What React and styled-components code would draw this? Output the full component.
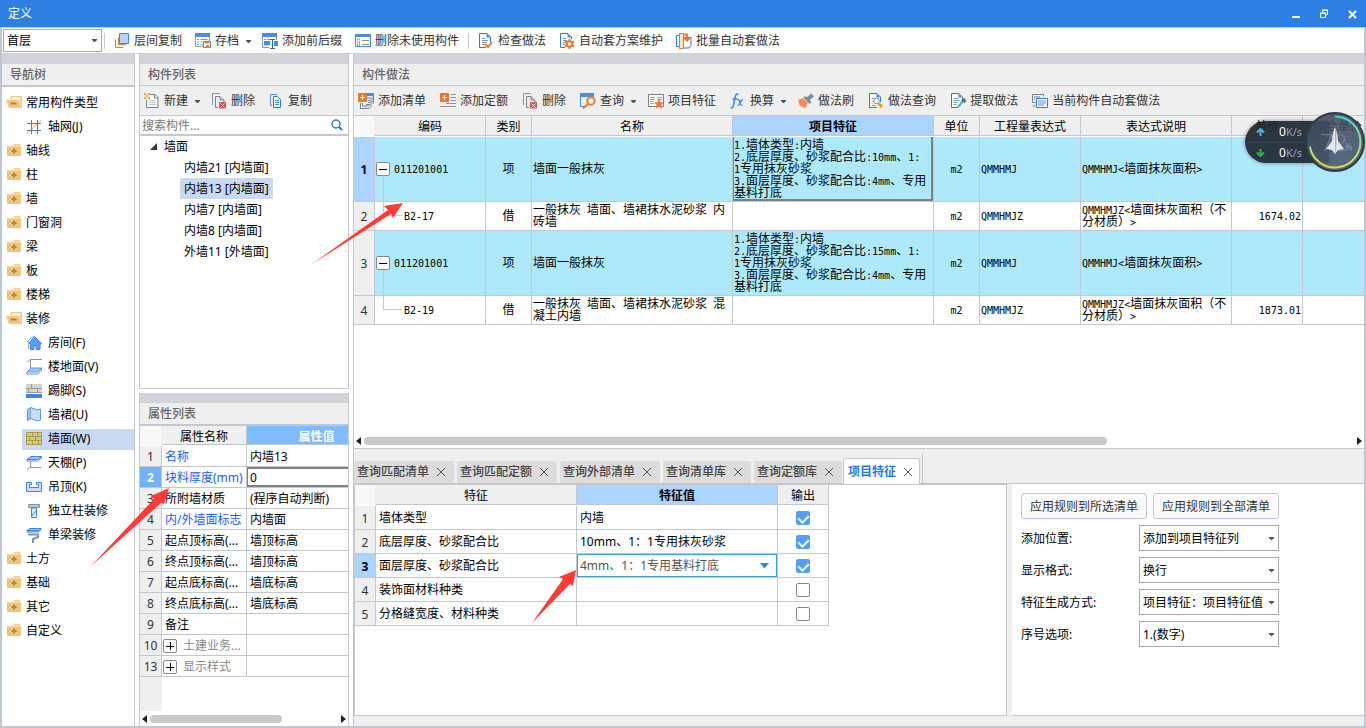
import React, { useState } from 'react';
import styled, { createGlobalStyle, css } from 'styled-components';

const line = '#c3c7d2';
const gray = '#efefef';
const orange = '#e8792b';

const GlobalStyle = createGlobalStyle`
  * {
    box-sizing: border-box;
  }
  body {
    margin: 0;
    background: #fff;
    overflow: hidden;
  }
  body, button, input, select {
    font-family: 'Noto Sans', 'Noto Sans CJK SC', sans-serif;
    font-size: 12px;
    line-height: 16px;
    color: #000;
  }
  button {
    padding: 0;
    border: 0;
    background: none;
  }
`;

/* ---------- icons ---------- */

const IconBox = styled.svg`
  flex: none;
  display: block;
  width: ${({ $w }) => $w || 16}px;
  height: 16px;
  fill: none;
`;

const icons = {
  floors: (
    <>
      <path d="M1.500 6.500v8H9M4.500 4.500v7H12" stroke={orange} />
      <path d="M5.500 .5h9v10h-9z" fill="#b3d4fc" stroke="#3f86dc" />
    </>
  ),
  archive: (
    <>
      <path d="M0 0h15v4H0z" fill="#4a8de0" />
      <path d="M.5 4v9.500H8M14.500 4v4" stroke="#8fa0b2" />
      <path d="M2 6.500h2M5.500 6.500h7M2 9h2M5.500 9h2M2 11.500h2M5.500 11.500h2" stroke="#7d93ab" />
      <path d="M8.500 8.500h7v6h-7z" fill="#fff" stroke="#3f86dc" />
      <path d="M10 8.500h4v2h-4zM11 12h3v3h-3z" fill={orange} />
    </>
  ),
  affix: (
    <>
      <path d="M0 0h15v4H0z" fill="#4a8de0" />
      <path d="M.5 4v10.500H7M14.500 4v3M2 6.500h2M5 6.500h3M2 12h4" stroke="#7d93ab" />
      <path d="M2 8h6v4H2zM12 8h4v5h-4z" fill="#4a8de0" />
      <path d="M8 6.500h5M8 15.500h5M10.500 6.500v9" stroke="#33699f" />
    </>
  ),
  unused: (
    <>
      <path d="M.5 1.500h15v12H.5z" fill="#fff" stroke="#4a8de0" />
      <path d="M0 1h16v3H0z" fill="#4a8de0" />
      <path d="M2 6.500h3M2 9.500h3M2 12h3" stroke={orange} strokeDasharray="1 1" strokeWidth="2" />
      <path d="M7 7.500h7M7 11.500h7" stroke="#8b9299" />
    </>
  ),
  check: (
    <>
      <path d="M12.500 9V4L9 .5H1.500v14H8" stroke="#2f7bc8" fill="#fff" />
      <path d="M8.500 .5v4h4z" fill="#4a8de0" />
      <path d="M4 5.500h3M4 7.500h6M4 9.500h5M4 11.500h3" stroke="#8496a8" />
      <path d="M7 11l3 3 4-5" stroke={orange} strokeWidth="2" />
    </>
  ),
  scheme: (
    <>
      <path d="M12.500 6V4L9 .5H1.500v14H6" stroke="#2f7bc8" fill="#fff" />
      <path d="M8.500 .5v4h4z" fill="#4a8de0" />
      <path d="M4 5.500h3M4 7.500h4M4 9.500h2M4 11.500h2" stroke="#8496a8" />
      <circle cx="10.500" cy="11" r="2.800" stroke={orange} strokeWidth="2" fill="#fff" />
      <path d="M10.500 6v2M10.500 14v2M6 8.500l2 1M13 12.500l2 1M6 13.500l2-1M13 9.500l2-1" stroke={orange} strokeWidth="2" />
    </>
  ),
  batch: (
    <>
      <path d="M4 2.500H.5v11H4M9 4.500h6v8l-2 2.500H8" stroke="#3277c4" fill="#fff" />
      <path d="M3.500 .5h4v15h-4z" fill="#fde3cf" stroke={orange} />
      <path d="M7 1.500h4v5M8 4.500l3 3 3-3" stroke={orange} strokeWidth="2" />
    </>
  ),
  create: (
    <>
      <path d="M6 1.500h5l3 3v10H2.500V7" stroke="#77818c" fill="#fafafa" />
      <path d="M10.500 1.500v3.500h3.500" stroke="#77818c" />
      <path d="M5 7.500h7M5 9.500h7M5 11.500h7" stroke="#c6cbd1" />
      <path d="M0 0h2v2H0zM4 0h2v2H4zM2 2h2v2H2zM0 4h2v2H0zM4 4h2v2H4z" fill="#f0a030" />
    </>
  ),
  remove: (
    <>
      <path d="M1.500 12V.5H9" stroke="#8a929b" />
      <path d="M4.500 14.500v-11H9l4 4V9M4.500 14.500H7M9 3.500V7h4" stroke="#77818c" fill="none" />
      <path d="M8 9h7v6.500H8z" fill="#d9535a" />
      <path d="M9.500 10.500l4 4M13.500 10.500l-4 4" stroke="#fff" />
    </>
  ),
  copy: (
    <>
      <path d="M4 12.500H2.500V1.500h6v1" stroke="#5f93c9" />
      <path d="M5.500 3.500h4l3 3v8h-7z" stroke="#2f7bc8" fill="#fff" />
      <path d="M7 7.500h4M7 9.500h4M7 11.500h4" stroke="#4a8de0" />
    </>
  ),
  addList: (
    <>
      <path d="M9 .5h6.500v10M9 2h6" stroke="#4a8de0" strokeWidth="2" />
      <path d="M2.500 10v5.500H11l2-2V5H9M4.500 10v3H11M10 7.500h2M10 9.500h2M8 11.500h4" stroke="#77818c" />
      <path d="M0 0h9v9H0z" fill={orange} />
      <path d="M4.500 2v5M2 4.500h5" stroke="#fff" />
    </>
  ),
  addQuota: (
    <>
      <path d="M11 1.500h5M11 4.500h5M11 7.500h5M6 10.500h10M0 13.500h16" stroke="#8b9299" />
      <path d="M0 0h9v9H0z" fill={orange} />
      <path d="M4.500 2v5M2 4.500h5" stroke="#fff" />
    </>
  ),
  search: (
    <>
      <path d="M.5 4v9.500H4" stroke="#4a8de0" />
      <path d="M0 0h14v4H0z" fill="#4a8de0" />
      <circle cx="11" cy="8" r="3.700" stroke={orange} strokeWidth="2" fill="#fff" />
      <path d="M8 11l-5 4.500" stroke={orange} strokeWidth="2" />
    </>
  ),
  feature: (
    <>
      <path d="M.5 1.500h15v12H.5z" fill="#fff" stroke="#77818c" />
      <path d="M2 4.500h5M2 6.500h5M2 8.500h4M2 10.500h4M9 4.500h5M9 6.500h5" stroke="#9aa3ac" />
      <path d="M11 6l1.500 3.300 3.500.3-2.700 2.400.8 3.500L11 13.700l-3.100 1.800.8-3.500L6 9.600l3.500-.3z" fill={orange} />
    </>
  ),
  fx: (
    <>
      <path d="M8.500 1.500C6.500 0 5.500 2 5 5L3.500 12C3 15 2 15.500.5 14.500M2.500 6h5" stroke="#3f86dc" strokeWidth="1.500" />
      <path d="M7.500 7c2-1 2 1 2.500 3s1 3 2.500 2M13 6.500c-2 0-3.500 6.500-5.500 6" stroke="#3f86dc" strokeWidth="1.300" />
    </>
  ),
  brush: (
    <>
      <path d="M0 7l5-2 5 5-3 5.500-2-1.500-1 .5-.5-2-1.500.5z" fill="#f58a56" />
      <path d="M5.500 4.500l2-1.500 6 6-2 2z" fill="#7d8b98" />
      <path d="M10 6l4.500-4" stroke="#7d8b98" strokeWidth="4" />
    </>
  ),
  lookup: (
    <>
      <path d="M12.500 9V4L9 .5H1.500v14H9" stroke="#2f7bc8" fill="#fff" />
      <path d="M8.500 .5v4h4z" fill="#4a8de0" />
      <path d="M3.500 5.500h2M3.500 8h1M3.500 10.500h1M4 12.500h4" stroke="#8496a8" />
      <circle cx="8.500" cy="8" r="2.800" stroke="#5a8fca" />
      <path d="M10.500 10.500l3.500 3.500" stroke="#f09a1f" strokeWidth="3" />
    </>
  ),
  extract: (
    <>
      <path d="M12.500 5V4L9 .5H1.500v14H8" stroke="#2f7bc8" fill="#fff" />
      <path d="M8.500 .5v4h4z" fill="#4a8de0" />
      <path d="M3.500 5.500h5M3.500 7.500h6M3.500 9.500h4M3.500 11.500h3" stroke="#8496a8" />
      <path d="M8 14l5-6" stroke="#3cb6d8" strokeWidth="2" />
      <path d="M12 6l3.500 3" stroke="#66717d" strokeWidth="3" />
      <path d="M13 8l2-2.500" stroke="#66717d" strokeWidth="2" />
    </>
  ),
  current: (
    <>
      <path d="M3.500 9.500h-3v-8h11v2M2 4h6M2 6h1" stroke="#77818c" />
      <path d="M1 11.500l2 2M1 14l2-2" stroke={orange} />
      <path d="M4.500 5.500h11v9h-11z" fill="#fff" stroke="#2f7bc8" />
      <path d="M6 8h8M6 10h8M6 12h6" stroke="#4a8de0" />
    </>
  ),
  folder: (
    <>
      <path d="M8 1h6l1 2v2H7z" fill="#f0cf93" />
      <path d="M1 3h13a1 1 0 0 1 1 1v8a1 1 0 0 1-1 1H2a1 1 0 0 1-1-1z" fill="#efc67c" />
      <path d="M1 3h14" stroke="#f8e6c3" />
      <path d="M8 5.500v5M5.500 8h5" stroke="#b58a35" strokeWidth="2" />
    </>
  ),
  folderOpen: (
    <>
      <path d="M5 1.500h10.500v11H5z" fill="#fdf6e6" stroke="#efc67c" />
      <path d="M0 5h13l2 8H3z" fill="#efc67c" />
      <path d="M14 3h1.500v10H15z" fill="#efc67c" />
      <path d="M4.500 8.500h6" stroke="#b58a35" strokeWidth="2" />
    </>
  ),
  axis: (
    <>
      <path d="M5.500 1v14M11.500 1v14M1 4.500h14M1 11.500h14" stroke="#4a7fb5" />
      <path d="M1 14.500L15 1.500" stroke={orange} strokeDasharray="2 1" />
    </>
  ),
  house: (
    <>
      <path d="M1 7l6-6M2.500 7v7" stroke="#7db4f3" />
      <path d="M8.500 1.500l7 7-1.500 1v5h-4v-4H8v4H4.500v-5L3 8z" fill="#5a9ff0" stroke="#3f86dc" />
    </>
  ),
  floor: (
    <>
      <path d="M1 3.500L4 .5h12M4.500 1v8" stroke="#8a929b" />
      <path d="M1 13l4-4h10.500L12 13z" fill="#9cc6f7" stroke="#5a96dc" />
      <path d="M1 13v2h11l3.500-4V9" stroke="#5a96dc" />
    </>
  ),
  skirting: (
    <>
      <path d="M0 1h16v9H0z" fill="#d4d4d2" />
      <path d="M0 5.500h16M5.500 1v4M11.500 5v5M2.500 5v5M0 9.500h16" stroke="#9b9b9b" />
      <path d="M0 11h16v4H0z" fill="#3f86dc" />
    </>
  ),
  wainscot: (
    <>
      <path d="M1.500 2.500l3.500-2v11l-3.500 2z" fill="#9cc6f7" stroke="#5a96dc" />
      <path d="M5 .5L11 3l3.500-1v11L11 14l-6-2.500" fill="#c4defb" stroke="#5a96dc" />
    </>
  ),
  wall: (
    <>
      <path d="M.5 1.500h15v12H.5z" fill="#cfc997" stroke="#b09a3e" />
      <path d="M0 5.500h16M0 9.500h16M6.500 1v4M11.500 1v4M3.500 5v4M9.500 5v4M6.500 9v5M12.500 9v5" stroke="#b09a3e" />
    </>
  ),
  ceiling: (
    <>
      <path d="M1 4.500l4-3h10.500l-4 3z" fill="#9cc6f7" stroke="#3f86dc" />
      <path d="M1 4.500V6h10.500l4-3V1.500" stroke="#3f86dc" />
      <path d="M4.500 7v5.500H15M4.500 12L1 15" stroke="#8a929b" />
    </>
  ),
  suspended: (
    <path d="M.5 3.500h5v2h-2v3h9v-3h-2v-2h5v9H.5z" fill="#c4defb" stroke="#3f86dc" />
  ),
  column: (
    <>
      <path d="M2.500 1.500h11v3h-11z" fill="#bfc4ca" stroke="#8a929b" />
      <path d="M5.500 5h5v9.500h-5z" fill="#d9eafc" stroke="#3f86dc" />
      <path d="M6 13l4-5" stroke="#3f86dc" />
    </>
  ),
  beam: (
    <>
      <path d="M1 3.500l3-2h11.500l-3 2zM1 3.500V5h11l3-2" fill="#9cc6f7" stroke="#3f86dc" />
      <path d="M2 7.500h10v2.500L7 12v4" stroke="#8a929b" strokeWidth="2" />
    </>
  ),
};

function Icon({ name }) {
  return <IconBox viewBox="0 0 16 16" aria-hidden="true">{icons[name]}</IconBox>;
}

function Caret() {
  return (
    <IconBox $w={9} viewBox="0 0 9 16" aria-hidden="true">
      <path d="M3 7h5v1L6 10H5L3 8z" fill="#555" />
    </IconBox>
  );
}

/* ---------- window ---------- */

const Window = styled.div`
  position: relative;
  display: flex;
  flex-direction: column;
  height: 100vh;
  background: #fff;
  overflow: hidden;
`;

const TitleBar = styled.header`
  flex: none;
  display: flex;
  justify-content: space-between;
  align-items: center;
  height: 27px;
  padding-left: 8px;
  background: #2d7fe2;
  color: #fff;
`;

const WindowButtons = styled.div`
  display: flex;
`;

const WindowButton = styled.button`
  display: flex;
  justify-content: center;
  width: 28px;
`;

const Frame = styled.div`
  flex: 1;
  min-height: 0;
  display: flex;
  flex-direction: column;
  border: solid #c0c6d2;
  border-width: 1px 2px 2px;
`;

const MainToolbar = styled.div`
  flex: none;
  display: flex;
  align-items: center;
  gap: 5px;
  height: 26px;
  padding-left: 1px;
  border-bottom: 1px solid #cfd1d6;
`;

const FloorPicker = styled.div`
  display: flex;
  align-items: center;
  gap: 2px;
`;

const Separator = styled.i`
  width: 1px;
  height: 16px;
  background: #c9c9c9;
`;

const ToolButton = styled.button`
  flex: none;
  display: flex;
  align-items: center;
  gap: 4px;
  padding: 2px ${({ $caret }) => ($caret ? 1 : 4)}px 2px 4px;
  white-space: nowrap;
  color: #333;
`;

function Tool({ icon, children, caret }) {
  return (
    <ToolButton type="button" $caret={caret}>
      <Icon name={icon} />
      {children}
      {caret && <Caret />}
    </ToolButton>
  );
}

const SelectWrap = styled.div`
  display: grid;
  align-items: center;
  width: ${({ $width }) => $width};
  height: ${({ $height }) => $height}px;
  border: ${({ $plain }) => ($plain ? '1px solid #3ba3d0' : '1px solid #a9a9a9')};
  background: #fff;

  > * {
    grid-area: 1 / 1;
  }
  > svg {
    justify-self: end;
    margin-right: ${({ $plain }) => ($plain ? 7 : 4)}px;
    pointer-events: none;
  }
`;

const Select = styled.select`
  appearance: none;
  width: 100%;
  height: 100%;
  padding: 1px 10px 0 ${({ $muted }) => ($muted ? 2 : 3)}px;
  border: 0;
  outline: 0;
  background: transparent;
  color: ${({ $muted }) => ($muted ? '#555' : '#000')};
`;

function ComboBox({ id, label, options, width, height, cell }) {
  return (
    <SelectWrap $width={width} $height={height} $plain={cell}>
      <Select id={id} aria-label={label} $muted={cell}>
        {options.map((o) => <option key={o}>{o}</option>)}
      </Select>
      {cell ? (
        <svg width="9" height="5" aria-hidden="true"><path d="M0 0h9L5 5H4z" fill="#3b8cba" /></svg>
      ) : (
        <svg width="5" height="3" aria-hidden="true"><path d="M0 0h5v1L3 3H2L0 1z" fill="#555" /></svg>
      )}
    </SelectWrap>
  );
}

/* ---------- panels ---------- */

const Workspace = styled.main`
  flex: 1;
  min-height: 0;
  display: grid;
  grid-template-columns: 133px 210px minmax(0, 1fr);
  gap: 4px;
`;

const MiddleColumn = styled.div`
  display: grid;
  grid-template-rows: 335fr 333fr;
  gap: 4px;
  min-height: 0;
`;

const RightColumn = styled.div`
  display: grid;
  grid-template-rows: 395fr 277fr;
  min-height: 0;
`;

const Panel = styled.section`
  display: flex;
  flex-direction: column;
  min-width: 0;
  min-height: 0;
  overflow: hidden;
  border: solid ${line};
  border-width: ${({ $border }) => $border};
`;

const PanelTitle = styled.h2`
  flex: none;
  margin: 0;
  padding: 3px 8px 2px;
  border-top: 10px solid #d2d4da;
  border-bottom: ${({ $thick }) => ($thick ? 2 : 1)}px solid ${line};
  background: ${gray};
  font-size: 12px;
  font-weight: 500;
  line-height: 16px;
  color: #666;
`;

const PanelToolbar = styled.div`
  flex: none;
  display: flex;
  align-items: center;
  gap: ${({ $gap }) => $gap}px;
  height: 30px;
  border-bottom: 1px solid ${line};
  background: ${gray};
  overflow: hidden;
`;

/* ---------- trees ---------- */

const NavList = styled.ul`
  margin: 0;
  padding: 4px 0 0;
  list-style: none;
`;

const NavItem = styled.li`
  display: flex;
  align-items: center;
  height: 24px;
`;

const NavLink = styled.a`
  flex: 1;
  display: flex;
  align-items: center;
  gap: ${({ $child }) => ($child ? 6 : 4)}px;
  height: 21px;
  margin-left: ${({ $child }) => ($child ? 20 : 0)}px;
  padding-left: 4px;
  background: ${({ $selected }) => ($selected ? '#c8d9f1' : 'none')};
  color: #000;
  text-decoration: none;
  white-space: nowrap;
`;

const SearchBar = styled.div`
  flex: none;
  display: flex;
  align-items: center;
  height: 20px;
  padding-right: 5px;
  border-bottom: 2px solid ${line};
`;

const SearchInput = styled.input`
  flex: 1;
  min-width: 0;
  height: 18px;
  padding: 0 2px;
  border: 0;
  outline: 0;

  &::placeholder {
    color: #777;
  }
`;

const ComponentList = styled.ul`
  margin: 0;
  padding: 0;
  list-style: none;

  ul {
    margin: 0;
    padding: 0 0 0 40px;
    list-style: none;
  }
`;

const GroupRow = styled.div`
  display: flex;
  align-items: center;
  gap: 7px;
  height: 21px;
  padding-left: 10px;
`;

const ComponentRow = styled.li`
  width: max-content;
  padding: 3px 4px 2px;
  background: ${({ $selected }) => ($selected ? '#c8d9f1' : 'none')};
`;

/* ---------- tables ---------- */

const TableArea = styled.div`
  flex: 1;
  min-height: 0;
  overflow: hidden;
  background: ${({ $gutter }) =>
    $gutter ? `linear-gradient(90deg, ${gray} ${$gutter}px, #fff ${$gutter}px)` : '#fff'};
`;

const Table = styled.table`
  table-layout: fixed;
  width: ${({ $width }) => $width}px;
  border-spacing: 0;
`;

const Th = styled.th`
  height: ${({ $height }) => $height || 21}px;
  padding: 2px 3px 0;
  border-right: 1px solid ${line};
  border-bottom: 1px solid #fff;
  background: ${gray};
  box-shadow: inset 0 -1px ${line};
  font-weight: 400;
  white-space: nowrap;

  ${({ $corner }) => $corner && css`
    background: #f8f8f8;
    border-right-color: ${gray};
    box-shadow: none;
  `}
  ${({ $active }) => $active && css`
    background: #abd5ff;
    font-weight: 700;
  `}
  ${({ $strong }) => $strong && css`
    background: #80bbfc;
    color: #fff;
    font-weight: 700;
  `}
`;

const Td = styled.td`
  position: relative;
  height: ${({ $height }) => $height}px;
  padding: ${({ $top }) => $top || 0}px ${({ $pad }) => ($pad === undefined ? 3 : $pad)}px 0;
  border-right: 1px solid ${line};
  border-bottom: 1px solid ${line};
  background: ${({ $fill }) => $fill || '#fff'};
  color: ${({ $color }) => $color || '#000'};
  text-align: ${({ $align }) => $align || 'left'};
  vertical-align: middle;
  white-space: nowrap;
  overflow: hidden;
`;

const RowNumber = styled(Td).attrs({ as: 'th', scope: 'row' })`
  padding: 2px 0 0;
  background: ${gray};
  color: #333;
  font-weight: 400;
  text-align: center;

  ${({ $current }) => $current && css`
    background: ${$current};
    color: ${({ $color }) => $color || '#000'};
    font-weight: 700;
  `}
`;

const GridCell = styled(Td)`
  padding: 0 1px;
  line-height: 12px;
  white-space: pre;
  ${({ $focused }) => $focused && css`
    box-shadow: inset 1px 0 #808080, inset -2px -2px #808080;
  `}
`;

const CodeCell = styled(GridCell)`
  padding-left: ${({ $child }) => ($child ? 29 : 1)}px;

  &::before {
    content: '';
    position: absolute;
    left: 8px;
    top: ${({ $child }) => ($child ? '0' : '50%')};
    bottom: ${({ $child }) => ($child ? '50%' : '0')};
    width: ${({ $child }) => ($child ? 18 : 1)}px;
    border: solid ${line};
    border-width: 0 0 ${({ $child }) => ($child ? 1 : 0)}px 1px;
  }
`;

const CodeLabel = styled.div`
  position: relative;
  display: flex;
  align-items: center;
  gap: 4px;
  height: 14px;
`;

// half-width latin next to full-width chinese, as in a fixed grid of 6px / 12px
const Half = styled.span`
  font-family: 'DejaVu Sans Mono', monospace;
  font-size: 10px;
  line-height: 1px;
`;

const Expander = styled.button`
  flex: none;
  display: flex;
  align-items: center;
  justify-content: center;
  width: 14px;
  height: 14px;
  border: 1px solid #888;
  border-radius: 2px;
  background: #fff;
`;

function GridText({ children }) {
  return children.split(/([\x20-\x7e]+)/).map((part, i) =>
    i % 2 ? <Half key={i}>{part}</Half> : part
  );
}

function ExpandButton({ open }) {
  return (
    <Expander type="button" aria-label={open ? '折叠' : '展开'}>
      <svg width="8" height="8" stroke="#000" aria-hidden="true">
        <path d={open ? 'M0 4.500h8' : 'M0 4.500h8M4.500 0v8'} />
      </svg>
    </Expander>
  );
}

const Checkbox = styled.input.attrs({ type: 'checkbox' })`
  appearance: none;
  display: block;
  width: 14px;
  height: 14px;
  margin: 0 auto;
  border: 1px solid #888;
  border-radius: 2px;
  background: #fff;

  &:checked {
    border-color: #50a0fc;
    background: #50a0fc;
  }
  &:checked::after {
    content: '';
    display: block;
    width: 5px;
    height: 8px;
    margin: 1px auto 0;
    border: solid #fff;
    border-width: 0 2px 2px 0;
    transform: rotate(45deg);
  }
`;

const CellInput = styled.input`
  display: block;
  width: 100%;
  height: 20px;
  padding: 0 2px;
  border: 2px solid #808080;
  border-left-width: 1px;
  outline: 0;
`;

const PropertyName = styled.div`
  display: flex;
  align-items: center;
  gap: 6px;
`;

const ScrollTrack = styled.div`
  flex: none;
  display: flex;
  align-items: center;
  gap: 3px;
  height: 15px;
  padding: 0 2px;
  background: #fff;
`;

const ScrollSpace = styled.div`
  flex: 1;
`;

const ScrollThumb = styled.div`
  width: ${({ $size }) => $size}%;
  height: 8px;
  border-radius: 4px;
  background: #c9c9c9;
`;

function ScrollBar({ size }) {
  return (
    <ScrollTrack>
      <svg width="5" height="8" aria-hidden="true"><path d="M5 0v8L0 4z" fill="#222" /></svg>
      <ScrollSpace><ScrollThumb $size={size} /></ScrollSpace>
      <svg width="5" height="8" aria-hidden="true"><path d="M0 0v8l5-4z" fill="#222" /></svg>
    </ScrollTrack>
  );
}

/* ---------- bottom tabs ---------- */

const TabBar = styled.div`
  flex: none;
  display: flex;
  align-items: flex-end;
  height: 35px;
  padding-top: 5px;
  border-bottom: 1px solid ${line};
`;

const Tabs = styled.div`
  display: flex;
  align-items: flex-end;
  gap: 3px;
  height: 100%;
  padding-right: 2px;
  border-right: 1px solid ${line};
`;

const Tab = styled.div`
  display: flex;
  align-items: center;
  gap: 7px;
  height: 22px;
  padding: 0 8px 0 3px;
  border-radius: 3px 3px 0 0;
  background: #dcdcdc;
  font-weight: 500;
  color: #444;

  ${({ $active }) => $active && css`
    height: 26px;
    margin: 0 0 -1px -2px;
    padding: 0 6px 0 4px;
    border: 1px solid ${line};
    border-bottom: 0;
    background: #fff;
    color: #2878e0;
    font-weight: 700;
  `}
`;

const CloseButton = styled.button`
  display: block;
  width: 10px;
  height: 14px;
  line-height: 0;
`;

const BottomPanel = styled(Panel)`
  padding-bottom: 10px;
  background: ${gray};
`;

const BottomBody = styled.div`
  flex: 1;
  min-height: 0;
  display: grid;
  grid-template-columns: minmax(0, 1fr) 352px;
  gap: 5px;
`;

const FeaturePane = styled.div`
  border: 1px solid ${line};
  background: #fff;
`;

const OptionPane = styled.form`
  display: flex;
  flex-direction: column;
  gap: 6px;
  padding: 9px;
  border-bottom: 1px solid ${line};
  background: #fff;
`;

const OptionRow = styled.div`
  display: flex;
  align-items: center;
  gap: 6px;
`;

const OptionLabel = styled.label`
  width: 112px;
  padding-top: 2px;
`;

const RuleButton = styled.button`
  width: 126px;
  height: 26px;
  padding-top: 2px;
  border: 1px solid #bcc6dc;
  border-radius: 3px;
  background: #fafafa;
  color: #333;
`;

/* ---------- overlays ---------- */

const SpeedWidget = styled.aside`
  position: absolute;
  top: 112px;
  right: 1px;
  width: 120px;
  height: 60px;
`;

const SpeedPill = styled.div`
  display: flex;
  flex-direction: column;
  width: 84px;
  margin-top: 9px;
  border-radius: 21px 0 0 21px;
  background: rgba(30, 38, 49, 0.92);
  box-shadow: 0 0 4px rgba(0, 0, 0, 0.4);
`;

const SpeedRow = styled.div`
  display: flex;
  align-items: center;
  height: 21px;
  padding-left: 11px;
  gap: 14px;
  color: #fff;

  & + & {
    border-top: 1px solid #3d4650;
  }
  small {
    font-size: 11px;
    color: #9ba3ab;
  }
`;

const Dial = styled.svg`
  position: absolute;
  top: 0;
  right: 0;
`;

const Arrows = styled.svg`
  position: absolute;
  inset: 0;
  width: 100%;
  height: 100%;
  pointer-events: none;
  fill: #fe3b37;
`;

/* ---------- data ---------- */

const navItems = [
  ['folderOpen', '常用构件类型'],
  ['axis', '轴网(J)', true],
  ['folder', '轴线'],
  ['folder', '柱'],
  ['folder', '墙'],
  ['folder', '门窗洞'],
  ['folder', '梁'],
  ['folder', '板'],
  ['folder', '楼梯'],
  ['folderOpen', '装修'],
  ['house', '房间(F)', true],
  ['floor', '楼地面(V)', true],
  ['skirting', '踢脚(S)', true],
  ['wainscot', '墙裙(U)', true],
  ['wall', '墙面(W)', true],
  ['ceiling', '天棚(P)', true],
  ['suspended', '吊顶(K)', true],
  ['column', '独立柱装修', true],
  ['beam', '单梁装修', true],
  ['folder', '土方'],
  ['folder', '基础'],
  ['folder', '其它'],
  ['folder', '自定义'],
];

const components = ['内墙21 [内墙面]', '内墙13 [内墙面]', '内墙7 [内墙面]', '内墙8 [内墙面]', '外墙11 [外墙面]'];

const properties = [
  { no: 1, name: '名称', value: '内墙13', link: true },
  { no: 2, name: '块料厚度(mm)', value: '0', link: true, editing: true },
  { no: 3, name: '所附墙材质', value: '(程序自动判断)' },
  { no: 4, name: '内/外墙面标志', value: '内墙面', link: true },
  { no: 5, name: '起点顶标高(...', value: '墙顶标高' },
  { no: 6, name: '终点顶标高(...', value: '墙顶标高' },
  { no: 7, name: '起点底标高(...', value: '墙底标高' },
  { no: 8, name: '终点底标高(...', value: '墙底标高' },
  { no: 9, name: '备注', value: '' },
  { no: 10, name: '土建业务...', value: '', group: true },
  { no: 13, name: '显示样式', value: '', group: true },
];

const methodColumns = [
  ['编码', 111], ['类别', 46], ['名称', 201], ['项目特征', 201], ['单位', 46],
  ['工程量表达式', 101], ['表达式说明', 151], ['单价', 71], ['综合单价', 71],
];

const methods = [
  {
    code: '011201001', type: '项', name: '墙面一般抹灰',
    feature: '1.墙体类型:内墙\n2.底层厚度、砂浆配合比:10mm、1:\n1专用抹灰砂浆\n3.面层厚度、砂浆配合比:4mm、专用\n基料打底',
    expr: 'QMMHMJ', desc: 'QMMHMJ<墙面抹灰面积>', price: '',
  },
  {
    code: 'B2-17', child: true, type: '借', name: '一般抹灰 墙面、墙裙抹水泥砂浆 内\n砖墙',
    feature: '', expr: 'QMMHMJZ', desc: 'QMMHMJZ<墙面抹灰面积（不\n分材质）>', price: '1674.02',
  },
  {
    code: '011201001', type: '项', name: '墙面一般抹灰',
    feature: '1.墙体类型:内墙\n2.底层厚度、砂浆配合比:15mm、1:\n1专用抹灰砂浆\n3.面层厚度、砂浆配合比:4mm、专用\n基料打底',
    expr: 'QMMHMJ', desc: 'QMMHMJ<墙面抹灰面积>', price: '',
  },
  {
    code: 'B2-19', child: true, type: '借', name: '一般抹灰 墙面、墙裙抹水泥砂浆 混\n凝土内墙',
    feature: '', expr: 'QMMHMJZ', desc: 'QMMHMJZ<墙面抹灰面积（不\n分材质）>', price: '1873.01',
  },
];

const features = [
  ['墙体类型', '内墙', true],
  ['底层厚度、砂浆配合比', '10mm、1：1专用抹灰砂浆', true],
  ['面层厚度、砂浆配合比', '4mm、1：1专用基料打底', true],
  ['装饰面材料种类', '', false],
  ['分格缝宽度、材料种类', '', false],
];

const tabs = ['查询匹配清单', '查询匹配定额', '查询外部清单', '查询清单库', '查询定额库', '项目特征'];

const optionFields = [
  ['position', '添加位置:', '添加到项目特征列'],
  ['format', '显示格式:', '换行'],
  ['generate', '特征生成方式:', '项目特征：项目特征值'],
  ['number', '序号选项:', '1.(数字)'],
];

/* ---------- sections ---------- */

function NavigationTree() {
  return (
    <Panel $border="0 1px 0 0">
      <PanelTitle $thick>导航树</PanelTitle>
      <NavList>
        {navItems.map(([icon, label, child]) => (
          <NavItem key={label}>
            <NavLink href="#" $child={child} $selected={label === '墙面(W)'}>
              <Icon name={icon} />
              {label}
            </NavLink>
          </NavItem>
        ))}
      </NavList>
    </Panel>
  );
}

function ComponentPanel() {
  return (
    <Panel $border="0 1px 1px">
      <PanelTitle>构件列表</PanelTitle>
      <PanelToolbar $gap={5}>
        <Tool icon="create" caret>新建</Tool>
        <Tool icon="remove">删除</Tool>
        <Tool icon="copy">复制</Tool>
      </PanelToolbar>
      <SearchBar>
        <SearchInput placeholder="搜索构件..." aria-label="搜索构件" />
        <svg width="12" height="12" fill="none" stroke="#2980b9" aria-hidden="true">
          <circle cx="5" cy="5" r="4" strokeWidth="1.500" />
          <path d="M8 8l3 3" strokeWidth="2" />
        </svg>
      </SearchBar>
      <ComponentList>
        <li>
          <GroupRow>
            <svg width="7" height="7" aria-hidden="true"><path d="M7 0v7H0z" fill="#333" /></svg>
            墙面
          </GroupRow>
          <ul>
            {components.map((name, i) => (
              <ComponentRow key={name} $selected={i === 1}>{name}</ComponentRow>
            ))}
          </ul>
        </li>
      </ComponentList>
    </Panel>
  );
}

function PropertyPanel() {
  return (
    <Panel $border="0 1px">
      <PanelTitle $thick>属性列表</PanelTitle>
      <TableArea $gutter={22}>
        <Table $width={247}>
          <colgroup>
            <col width="22" />
            <col width="85" />
            <col width="140" />
          </colgroup>
          <thead>
            <tr>
              <Th $corner $height={20} />
              <Th $height={20}>属性名称</Th>
              <Th $height={20} $strong>属性值</Th>
            </tr>
          </thead>
          <tbody>
            {properties.map((p) => (
              <tr key={p.no}>
                <RowNumber $height={21} $current={p.editing && '#72b2fa'} $color={p.editing && '#fff'}>{p.no}</RowNumber>
                <Td $height={21} $top={2} $pad={p.group ? 1 : 3} $color={(p.link && '#1a5cff') || (p.group && '#888')}>
                  {p.group ? <PropertyName><ExpandButton />{p.name}</PropertyName> : p.name}
                </Td>
                <Td $height={21} $top={p.editing ? 0 : 2} $pad={p.editing ? 0 : 3}>
                  {p.editing ? <CellInput defaultValue={p.value} aria-label={p.name} /> : p.value}
                </Td>
              </tr>
            ))}
          </tbody>
        </Table>
      </TableArea>
      <ScrollBar size={70} />
    </Panel>
  );
}

function MethodPanel() {
  return (
    <Panel $border="0 0 1px 1px">
      <PanelTitle>构件做法</PanelTitle>
      <PanelToolbar $gap={6}>
        <Tool icon="addList">添加清单</Tool>
        <Tool icon="addQuota">添加定额</Tool>
        <Tool icon="remove">删除</Tool>
        <Tool icon="search" caret>查询</Tool>
        <Tool icon="feature">项目特征</Tool>
        <Tool icon="fx" caret>换算</Tool>
        <Tool icon="brush">做法刷</Tool>
        <Tool icon="lookup">做法查询</Tool>
        <Tool icon="extract">提取做法</Tool>
        <Tool icon="current">当前构件自动套做法</Tool>
      </PanelToolbar>
      <TableArea>
        <Table $width={1020}>
          <colgroup>
            <col width="21" />
            {methodColumns.map(([label, width]) => <col key={label} width={width} />)}
          </colgroup>
          <thead>
            <tr>
              <Th $corner />
              {methodColumns.map(([label]) => (
                <Th key={label} $active={label === '项目特征'}>{label}</Th>
              ))}
            </tr>
          </thead>
          <tbody>
            {methods.map((m, i) => {
              const cell = { $height: m.child ? 29 : 65, $fill: m.child ? '#fff' : '#aee9fb' };
              return (
                <tr key={i}>
                  <RowNumber $height={cell.$height} $current={i === 0 && '#abd5ff'}>{i + 1}</RowNumber>
                  <CodeCell {...cell} $child={m.child}>
                    <CodeLabel>
                      {!m.child && <ExpandButton open />}
                      <GridText>{m.code}</GridText>
                    </CodeLabel>
                  </CodeCell>
                  <GridCell {...cell} $align="center">{m.type}</GridCell>
                  <GridCell {...cell}><GridText>{m.name}</GridText></GridCell>
                  <GridCell {...cell} $focused={i === 0}><GridText>{m.feature}</GridText></GridCell>
                  <GridCell {...cell} $align="center"><GridText>m2</GridText></GridCell>
                  <GridCell {...cell}><GridText>{m.expr}</GridText></GridCell>
                  <GridCell {...cell}><GridText>{m.desc}</GridText></GridCell>
                  <GridCell {...cell} $align="right"><GridText>{m.price}</GridText></GridCell>
                  <GridCell {...cell} />
                </tr>
              );
            })}
          </tbody>
        </Table>
      </TableArea>
      <ScrollBar size={75} />
    </Panel>
  );
}

function FeatureTable() {
  const [checked, setChecked] = useState(features.map((f) => f[2]));
  const toggle = (index) => setChecked(checked.map((c, i) => (i === index ? !c : c)));

  return (
    <Table $width={474}>
      <colgroup>
        <col width="21" />
        <col width="201" />
        <col width="201" />
        <col width="51" />
      </colgroup>
      <thead>
        <tr>
          <Th $corner />
          <Th>特征</Th>
          <Th $active>特征值</Th>
          <Th>输出</Th>
        </tr>
      </thead>
      <tbody>
        {features.map(([name, value], i) => (
          <tr key={name}>
            <RowNumber $height={24} $current={i === 2 && '#abd5ff'}>{i + 1}</RowNumber>
            <Td $height={24}>{name}</Td>
            <Td $height={24} $pad={i === 2 ? 0 : 3}>
              {i === 2 ? <ComboBox cell label={name} width="100%" height={23} options={[value]} /> : value}
            </Td>
            <Td $height={24}>
              <Checkbox checked={checked[i]} onChange={() => toggle(i)} aria-label={`输出 ${name}`} />
            </Td>
          </tr>
        ))}
      </tbody>
    </Table>
  );
}

function FeaturePanel() {
  return (
    <BottomPanel $border="0 0 0 1px">
      <TabBar>
        <Tabs>
          {tabs.map((label) => (
            <Tab key={label} $active={label === '项目特征'}>
              {label}
              <CloseButton type="button" aria-label={`关闭 ${label}`}>
                <svg width="10" height="10" stroke="#555" aria-hidden="true"><path d="M1 1l8 8M9 1L1 9" /></svg>
              </CloseButton>
            </Tab>
          ))}
        </Tabs>
      </TabBar>
      <BottomBody>
        <FeaturePane>
          <FeatureTable />
        </FeaturePane>
        <OptionPane>
          <OptionRow>
            <RuleButton type="button">应用规则到所选清单</RuleButton>
            <RuleButton type="button">应用规则到全部清单</RuleButton>
          </OptionRow>
          {optionFields.map(([id, label, value]) => (
            <OptionRow key={id}>
              <OptionLabel htmlFor={id}>{label}</OptionLabel>
              <ComboBox id={id} width="140px" height={26} options={[value]} />
            </OptionRow>
          ))}
        </OptionPane>
      </BottomBody>
    </BottomPanel>
  );
}

function NetworkSpeed() {
  return (
    <SpeedWidget>
      <SpeedPill>
        <SpeedRow>
          <svg width="9" height="8" fill="none" stroke="#3fb4f5" strokeWidth="2" aria-hidden="true">
            <path d="M4.500 8V1M1 4.500L4.500 1 8 4.500" />
          </svg>
          <span>0<small>K/s</small></span>
        </SpeedRow>
        <SpeedRow>
          <svg width="9" height="8" fill="none" stroke="#2fb64a" strokeWidth="2" aria-hidden="true">
            <path d="M4.500 0v7M1 3.500L4.500 7 8 3.500" />
          </svg>
          <span>0<small>K/s</small></span>
        </SpeedRow>
      </SpeedPill>
      <Dial width="60" height="60" viewBox="0 0 60 60" aria-hidden="true">
        <defs>
          <linearGradient id="ring" x1="0" y1="1" x2="0" y2="0">
            <stop offset="0" stopColor="#e8d44a" />
            <stop offset="0.500" stopColor="#8fe08a" />
            <stop offset="1" stopColor="#35d6d8" />
          </linearGradient>
          <linearGradient id="disc" x1="0" y1="0" x2="0" y2="1">
            <stop offset="0" stopColor="#3f4a5c" />
            <stop offset="1" stopColor="#4b5a70" />
          </linearGradient>
        </defs>
        <circle cx="30" cy="30" r="29" fill="url(#disc)" fillOpacity="0.880" stroke="#2f3947" strokeWidth="2" />
        <text x="15" y="39" fontSize="24" fontWeight="300" fill="#8b96a5" opacity="0.600">72</text>
        <text x="40" y="38" fontSize="9" fill="#8b96a5">%</text>
        <path d="M30 4.500a25.500 25.500 0 1 1-25.200 30" fill="none" stroke="url(#ring)" strokeWidth="2" />
        <path d="M30 15c2 5 3 10 3 14l6 8-6 1-3 4-3-4-6-1 6-8c0-4 1-9 3-14z" fill="#e3e7ec" />
        <path d="M30 15c2 8 2 20 0 27z" fill="#a9b1bc" />
      </Dial>
    </SpeedWidget>
  );
}

export default function App() {
  return (
    <Window>
      <GlobalStyle />
      <TitleBar>
        定义
        <WindowButtons>
          <WindowButton type="button" aria-label="最小化">
            <svg width="10" height="10"><path d="M1 7h8v2H1z" fill="#fff" /></svg>
          </WindowButton>
          <WindowButton type="button" aria-label="还原">
            <svg width="10" height="10" fill="none" stroke="#fff">
              <path d="M3.500 4V1.500h5v4H7M3 1h6M1.500 4.500h5v4h-5zM1 4h6" />
            </svg>
          </WindowButton>
          <WindowButton type="button" aria-label="关闭">
            <svg width="10" height="10" stroke="#fff" strokeWidth="2"><path d="M2 2l7 7M9 2L2 9" /></svg>
          </WindowButton>
        </WindowButtons>
      </TitleBar>
      <Frame>
        <MainToolbar>
          <FloorPicker>
            <ComboBox label="楼层" width="99px" height={23} options={['首层']} />
            <Separator />
          </FloorPicker>
          <Tool icon="floors">层间复制</Tool>
          <Tool icon="archive" caret>存档</Tool>
          <Tool icon="affix">添加前后缀</Tool>
          <Tool icon="unused">删除未使用构件</Tool>
          <Separator />
          <Tool icon="check">检查做法</Tool>
          <Tool icon="scheme">自动套方案维护</Tool>
          <Tool icon="batch">批量自动套做法</Tool>
        </MainToolbar>
        <Workspace>
          <NavigationTree />
          <MiddleColumn>
            <ComponentPanel />
            <PropertyPanel />
          </MiddleColumn>
          <RightColumn>
            <MethodPanel />
            <FeaturePanel />
          </RightColumn>
        </Workspace>
      </Frame>
      <NetworkSpeed />
      <Arrows aria-hidden="true">
        <path d="M312 264L388 210l-4-4 19-3-10 15-2-4z" />
        <path d="M91 566l63-67-3-3 18-8-5 16-3-1z" />
        <path d="M532 623l31-44-4-2 17-7-3 16-3-2z" />
      </Arrows>
    </Window>
  );
}
